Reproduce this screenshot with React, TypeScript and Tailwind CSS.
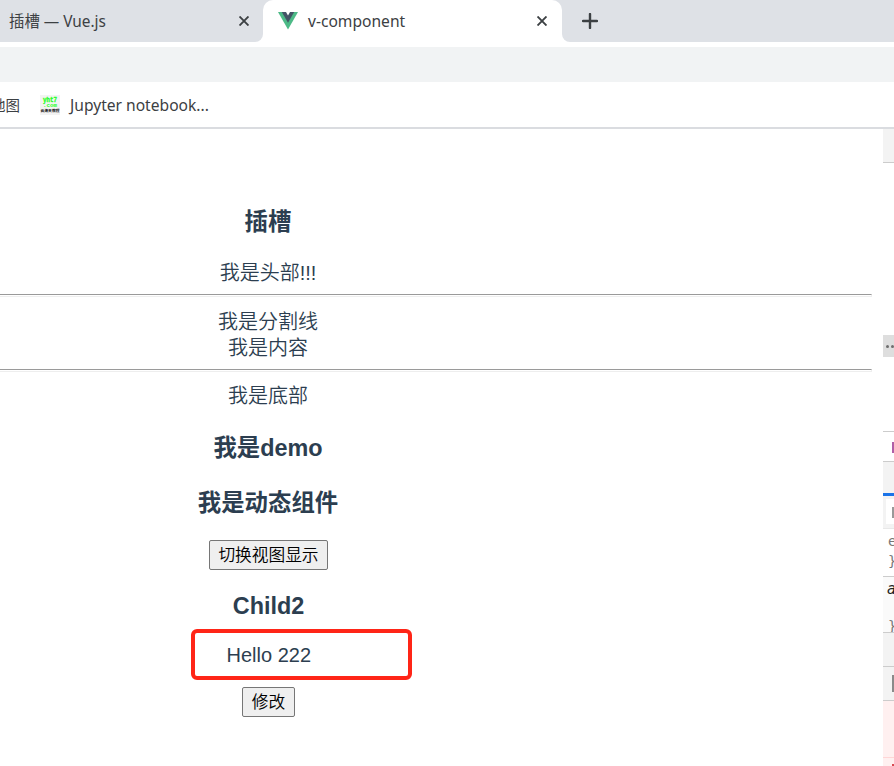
import { useState } from "react";
import type { ReactNode } from "react";

const UI_FONT = "font-['Noto_Sans','Noto_Sans_CJK_SC',sans-serif]";
const PAGE_FONT = "font-['Liberation_Sans','Noto_Sans_CJK_SC',sans-serif]";

function VueLogo() {
  return (
    <svg viewBox="0 0 20 18" className="h-[18px] w-5 shrink-0">
      <path d="M0 0h20L10 17.5z" fill="#4dba87" />
      <path d="M3.8 0h12.4L10 10.8z" fill="#435466" />
      <path d="M8 0h4L10 3.4z" fill="#fff" />
    </svg>
  );
}

function CloseIcon() {
  return (
    <svg viewBox="0 0 10 10" className="h-[10px] w-[10px] shrink-0">
      <path d="M.5.5l9 9M9.5.5l-9 9" stroke="#3c4043" strokeWidth="1.9" />
    </svg>
  );
}

function NotebookIcon() {
  return (
    <svg viewBox="0 0 20 20" className="h-5 w-5 shrink-0">
      <rect width="20" height="20" fill="#f3f3f3" />
      <text x="3" y="6.8" textLength="14" lengthAdjust="spacingAndGlyphs" fontFamily="Liberation Mono" fontWeight="bold" fontSize="6.8" fill="#1dff1d" stroke="#1dff1d" strokeWidth=".3">yht7</text>
      <text x="3" y="11.8" textLength="14" lengthAdjust="spacingAndGlyphs" fontFamily="Liberation Mono" fontWeight="bold" fontSize="4.8" fill="#1dff1d">.com</text>
      <text x="0.5" y="16.8" textLength="19" lengthAdjust="spacingAndGlyphs" fontFamily="Noto Sans CJK SC" fontWeight="bold" fontSize="3.8" fill="#111">云海天教程</text>
    </svg>
  );
}

function TabStrip() {
  return (
    <div className="flex h-[42px] bg-white text-[15.6px] text-[#3c4043]">
      <div className="flex w-[263px] shrink-0 items-center justify-between rounded-br-[8px] bg-[#dee1e6] pl-[9px] pr-[14px]">
        <span className="pt-px text-[15.4px] whitespace-nowrap">插槽 — Vue.js</span>
        <CloseIcon />
      </div>
      <div className="flex w-[299px] shrink-0 bg-[#dee1e6]">
        <div className="flex w-full items-center rounded-t-[10px] bg-white pl-[15px] pr-[15px]">
          <VueLogo />
          <span className="ml-[10px] flex-1 pt-[2px] whitespace-nowrap">v-component</span>
          <CloseIcon />
        </div>
      </div>
      <div className="flex flex-1 items-center rounded-bl-[8px] bg-[#dee1e6] pl-5">
        <svg viewBox="0 0 16 16" className="h-4 w-4">
          <path d="M8 1v14M1 8h14" stroke="#3c4043" strokeWidth="2.4" strokeLinecap="round" />
        </svg>
      </div>
    </div>
  );
}

function Title({ className, children }: { className: string; children: ReactNode }) {
  return <h3 className={`w-[536px] text-center text-[23.4px] leading-[30px] font-bold ${className}`}>{children}</h3>;
}

function Line({ className, children }: { className: string; children: ReactNode }) {
  return <p className={`w-[536px] text-center text-[20px] leading-[26px] font-[350] ${className}`}>{children}</p>;
}

function Divider({ className }: { className: string }) {
  return <hr className={`h-[3px] border-t border-r border-b border-t-[#9a9a9a] border-r-[#eee] border-b-[#eee] ${className}`} />;
}

function Button({ className, onClick, children }: { className: string; onClick?: () => void; children: ReactNode }) {
  return (
    <button onClick={onClick} className={`block h-[30px] rounded-[2px] border border-[#767676] bg-[#efefef] pt-[2px] text-center text-[16.7px] leading-[26px] font-[350] whitespace-nowrap text-black ${className}`}>
      {children}
    </button>
  );
}

function Inspector() {
  return (
    <aside className="w-[11px] shrink-0 overflow-hidden font-['DejaVu_Sans_Mono',monospace] text-[15px]">
      <div className="h-[34px] border-b border-[#ccc] bg-[#f3f3f3]" />
      <div className="mt-[172px] flex h-[22px] items-center gap-[2px] bg-[#dedede] pl-[3px]">
        <span className="h-[3px] w-[3px] shrink-0 rounded-full bg-[#6e6e6e]" />
        <span className="h-[3px] w-[3px] shrink-0 rounded-full bg-[#6e6e6e]" />
      </div>
      <div className="mt-[74px] h-[31px] border-y border-[#ccc] pt-[10px] pl-[9px]">
        <div className="h-[11px] w-[2px] bg-[#b05fa6]" />
      </div>
      <div className="h-[34px] border-b-[3px] border-[#1a73e8] bg-[#f3f3f3]" />
      <div className="h-[33px] border-b border-[#e8e8e8] bg-[#f3f3f3] pt-[3px] pl-[3px]">
        <div className="h-[25px] bg-white pt-2 pl-[6px]">
          <div className="h-[11px] w-[2px] bg-[#999]" />
        </div>
      </div>
      <div className="h-[48px] border-b border-[#ccc] pt-[2px] pl-[5px] text-[14px] leading-[20px] text-[#777]">
        <div>e</div>
        <div>{"}"}</div>
      </div>
      <div className="h-[56px] overflow-hidden border-b border-[#ccc] bg-[#fafafa] pt-[3px] pl-[4px] leading-[19px]">
        <div className="text-[#222] italic">a</div>
        <div className="pt-[18px] pl-[1px] text-[14px] text-[#777]">{"}"}</div>
      </div>
      <div className="h-[34px] border-b border-[#ccc] bg-[#f3f3f3]" />
      <div className="h-[34px] border-b border-[#ccc] bg-[#f3f3f3] pt-2 pl-[9px]">
        <div className="h-[17px] w-[2px] bg-[#8a8a8a]" />
      </div>
      <div className="h-[57px] border-b border-[#ffd6d6] bg-[#fff0f0]" />
      <div className="h-[8px] bg-[#fff0f0] pt-[6px] pl-[9px]">
        <div className="h-[2px] w-[2px] bg-[#d94a52]" />
      </div>
    </aside>
  );
}

export default function App() {
  const [message, setMessage] = useState("Hello 222");

  return (
    <div className={`h-[766px] w-[894px] overflow-hidden bg-white ${UI_FONT}`}>
      <TabStrip />
      <div className="mt-[5px] h-[35px] bg-[#f1f3f4]" />
      <div className="flex h-[47px] items-center border-b-2 border-[#dadce0] pt-px text-[15.6px] text-[#3c4043]">
        <div className="flex w-5 shrink-0 justify-end overflow-hidden pt-px text-[14.5px] whitespace-nowrap">地图</div>
        <div className="ml-5 flex items-center gap-[10px]">
          <NotebookIcon />
          <span className="pt-[2px] whitespace-nowrap">Jupyter notebook...</span>
        </div>
      </div>

      <div className="flex h-[637px]">
        <main className={`mr-[11px] w-[872px] shrink-0 text-[#2c3e50] ${PAGE_FONT}`}>
          <Title className="pt-[78px]">插槽</Title>
          <Line className="mt-[23px]">我是头部!!!</Line>
          <Divider className="mt-[8px]" />
          <Line className="mt-[12px]">我是分割线</Line>
          <Line className="">我是内容</Line>
          <Divider className="mt-[8px]" />
          <Line className="mt-[11px]">我是底部</Line>
          <Title className="mt-[24px]">我是demo</Title>
          <Title className="mt-[25px]">我是动态组件</Title>
          <Button className="mt-[22px] ml-[209px] w-[119px]">切换视图显示</Button>
          <Title className="mt-[21px] pl-px">Child2</Title>
          <div className="mt-[8px] ml-[191px] flex h-[51px] w-[221px] items-center rounded-[6px] border-4 border-[#ff2517] pl-[31.5px] text-[20px]">
            {message}
          </div>
          <Button className="mt-[7px] ml-[242px] w-[53px]" onClick={() => setMessage("Hello 222")}>修改</Button>
        </main>
        <Inspector />
      </div>
    </div>
  );
}
